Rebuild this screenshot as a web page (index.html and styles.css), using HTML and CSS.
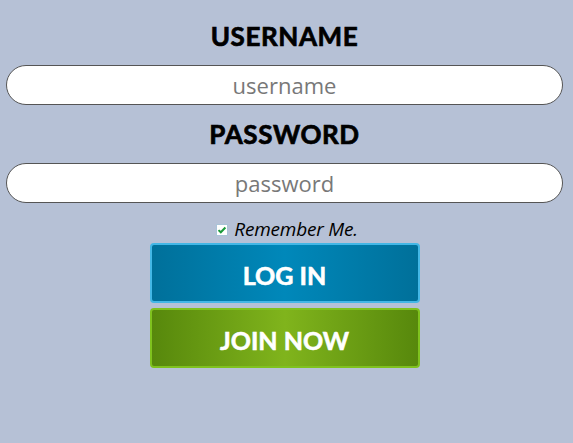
FILE: index.html
```html
<!DOCTYPE html>
<html>
<head>
<meta charset="utf-8">
<link rel="stylesheet" href="styles.css">
</head>
<body>
<form class="login">
  <label class="field-label" for="u">USERNAME</label>
  <input class="field" id="u" type="text" placeholder="username">
  <label class="field-label" for="p">PASSWORD</label>
  <input class="field" id="p" type="password" placeholder="password">
  <div class="remember">
    <span class="check"><svg viewBox="0 0 12 12" width="12" height="12"><rect x="0.5" y="0.5" width="11" height="11" fill="#fff" stroke="#a9c4d8"/><path d="M2.5 6.1 L4.8 8.3 L9.4 3.5" fill="none" stroke="#1a9a3a" stroke-width="2"/></svg></span>
    <span class="remember-text">Remember Me.</span>
  </div>
  <button type="button" class="btn btn-login">LOG IN</button>
  <button type="button" class="btn btn-join">JOIN NOW</button>
</form>
</body>
</html>
```
FILE: styles.css
```css
html, body {
  margin: 0;
  padding: 0;
  background: #b6c1d6;
  height: 100%;
}
.login {
  display: flex;
  flex-direction: column;
  align-items: center;
  padding: 18px 10px 0 6px;
  font-family: Lato, "Open Sans", sans-serif;
}
.field-label {
  font-weight: 700;
  font-size: 26px;
  line-height: 36px;
  letter-spacing: 0.6px;
  -webkit-text-stroke: 0.7px #000;
  color: #000;
  margin-bottom: 11px;
}
.field {
  box-sizing: border-box;
  width: 100%;
  height: 40px;
  border: 1px solid #555;
  border-radius: 20px;
  background: #fff;
  text-align: center;
  font-family: "Open Sans", sans-serif;
  font-size: 22px;
  color: #333;
  outline: none;
  padding: 0 20px;
  margin-bottom: 11px;
}
.field::placeholder {
  color: #787878;
}
.remember {
  display: flex;
  align-items: center;
  gap: 6px;
  height: 26px;
  margin-top: 2px;
  margin-left: 5px;
}
.check {
  display: flex;
  margin-top: 2px;
}
.remember-text {
  font-family: "Open Sans", sans-serif;
  font-style: italic;
  font-size: 19px;
  letter-spacing: -0.2px;
  color: #000;
}
.btn {
  box-sizing: border-box;
  width: 270px;
  height: 60px;
  border-radius: 4px;
  font-family: Lato, "Open Sans", sans-serif;
  font-weight: 700;
  font-size: 25px;
  -webkit-text-stroke: 0.6px #fff;
  color: #fff;
  cursor: pointer;
  padding: 3px 0 0;
}
.btn-login {
  margin-top: 1px;
  border: 2px solid #43b7e6;
  background: linear-gradient(to right, #00709a 0%, #0088ba 50%, #00709a 100%);
}
.btn-join {
  margin-top: 5px;
  border: 2px solid #7fc21e;
  background: linear-gradient(to right, #57880c 0%, #80b41c 50%, #57880c 100%);
}
```
